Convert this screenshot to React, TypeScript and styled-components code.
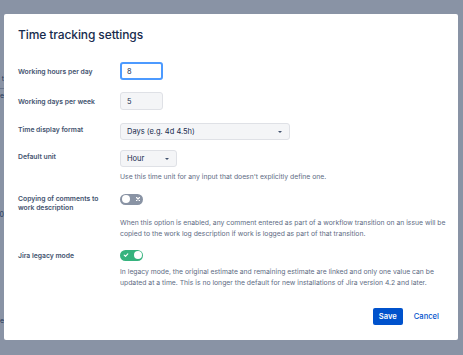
import styled, { createGlobalStyle } from "styled-components";

const GlobalStyle = createGlobalStyle`
  html, body {
    margin: 0;
    padding: 0;
    width: 463px;
    height: 355px;
    overflow: hidden;
    font-family: Inter, "Noto Sans", "Liberation Sans", sans-serif;
    color: #172b4d;
  }
`;

const Page = styled.div`
  position: relative;
  width: 463px;
  height: 355px;
  background: #ffffff;
  overflow: hidden;
`;

const BackStrip = styled.div`
  display: flex;
  flex-direction: column;
  align-items: flex-end;
  width: 4px;
  overflow: hidden;
  font-size: 7px;
  color: #42526e;
`;

const BackGlyph = styled.div<{ $top: number }>`
  margin-top: ${(p) => p.$top}px;
  line-height: 8px;
  white-space: nowrap;
`;

const BackRule = styled.div<{ $top: number }>`
  margin-top: ${(p) => p.$top}px;
  width: 4px;
  height: 1px;
  background: #c1c7d0;
`;

const Overlay = styled.div`
  position: absolute;
  inset: 0;
  background: rgba(9, 30, 66, 0.48);
  padding: 14px 5px 0 4px;
`;

const Dialog = styled.div`
  width: 454px;
  height: 326px;
  box-sizing: border-box;
  background: #ffffff;
  border-radius: 2px;
  padding: 13px 13px 0 14px;
  display: flex;
  flex-direction: column;
`;

const Title = styled.h1`
  margin: 0 0 19px;
  font-size: 12px;
  line-height: 16px;
  font-weight: 500;
  letter-spacing: -0.1px;
  color: #172b4d;
`;

const Row = styled.div<{ $gap: number }>`
  display: grid;
  grid-template-columns: 102px 1fr;
  margin-bottom: ${(p) => p.$gap}px;
`;

const Label = styled.div<{ $pt: number }>`
  padding-top: ${(p) => p.$pt}px;
  font-size: 6.8px;
  line-height: 9px;
  font-weight: 600;
  color: #42526e;
`;

const Field = styled.div`
  display: flex;
  flex-direction: column;
  align-items: flex-start;
`;

const Input = styled.div<{ $focused?: boolean }>`
  box-sizing: border-box;
  width: 43px;
  height: 18px;
  display: flex;
  align-items: center;
  padding-left: ${(p) => (p.$focused ? 5 : 6)}px;
  border-radius: 3px;
  font-size: 7.4px;
  color: #172b4d;
  background: ${(p) => (p.$focused ? "#ffffff" : "#f4f5f7")};
  border: ${(p) => (p.$focused ? "2px solid #4c9aff" : "1px solid #dfe1e6")};
`;

const Select = styled.div<{ $w: number }>`
  box-sizing: border-box;
  width: ${(p) => p.$w}px;
  height: 17px;
  display: flex;
  align-items: center;
  justify-content: space-between;
  padding: 0 7px 0 6px;
  border-radius: 3px;
  font-size: 7.5px;
  color: #172b4d;
  background: #f4f5f7;
  border: 1px solid #dfe1e6;
`;

const Caret = styled.span`
  width: 0;
  height: 0;
  border-left: 2px solid transparent;
  border-right: 2px solid transparent;
  border-top: 2px solid #42526e;
`;

const Help = styled.p<{ $mt: number }>`
  margin: ${(p) => p.$mt}px 0 0;
  font-size: 6.8px;
  line-height: 11.5px;
  color: #5e6c84;
  white-space: nowrap;
`;

const Toggle = styled.div<{ $on?: boolean }>`
  box-sizing: border-box;
  width: 23px;
  height: 11px;
  border-radius: 6px;
  padding: 0 1.5px;
  display: flex;
  align-items: center;
  justify-content: space-between;
  background: ${(p) => (p.$on ? "#36b37e" : "#8993a4")};
`;

const Knob = styled.span`
  width: 8px;
  height: 8px;
  border-radius: 50%;
  background: #ffffff;
`;

const ToggleIcon = styled.svg`
  width: 6px;
  height: 6px;
  margin: 0 1px;
`;

const Footer = styled.div`
  margin-top: auto;
  margin-bottom: 15px;
  display: flex;
  justify-content: flex-end;
  align-items: center;
  gap: 5px;
`;

const Button = styled.button<{ $primary?: boolean }>`
  height: 17px;
  padding: 0 6px;
  border: 0;
  border-radius: 2px;
  font-family: inherit;
  font-size: 7.6px;
  font-weight: ${(p) => (p.$primary ? 600 : 500)};
  color: ${(p) => (p.$primary ? "#ffffff" : "#0052cc")};
  background: ${(p) => (p.$primary ? "#0052cc" : "transparent")};
`;

const Cross = () => (
  <ToggleIcon viewBox="0 0 6 6">
    <path d="M1.5 1.5 L4.5 4.5 M4.5 1.5 L1.5 4.5" stroke="#ffffff" strokeWidth="1.1" strokeLinecap="round" />
  </ToggleIcon>
);

const Check = () => (
  <ToggleIcon viewBox="0 0 6 6">
    <path d="M1.2 3.1 L2.5 4.3 L4.8 1.8" stroke="#ffffff" strokeWidth="1.1" fill="none" strokeLinecap="round" strokeLinejoin="round" />
  </ToggleIcon>
);

const App = () => {
  return (
    <>
      <GlobalStyle />
      <Page>
        <BackStrip>
          <BackGlyph $top={75}>t</BackGlyph>
          <BackRule $top={5} />
          <BackGlyph $top={3}>e</BackGlyph>
          <BackGlyph $top={111}>0</BackGlyph>
          <BackGlyph $top={98}>e</BackGlyph>
        </BackStrip>
        <Overlay>
          <Dialog>
            <Title>Time tracking settings</Title>

            <Row $gap={12}>
              <Label $pt={4.5}>Working hours per day</Label>
              <Field>
                <Input $focused>8</Input>
              </Field>
            </Row>

            <Row $gap={13}>
              <Label $pt={4.5}>Working days per week</Label>
              <Field>
                <Input>5</Input>
              </Field>
            </Row>

            <Row $gap={10}>
              <Label $pt={2}>Time display format</Label>
              <Field>
                <Select $w={170}>
                  <span>Days (e.g. 4d 4.5h)</span>
                  <Caret />
                </Select>
              </Field>
            </Row>

            <Row $gap={11}>
              <Label $pt={1.5}>Default unit</Label>
              <Field>
                <Select $w={57}>
                  <span>Hour</span>
                  <Caret />
                </Select>
                <Help $mt={4}>Use this time unit for any input that doesn't explicitly define one.</Help>
              </Field>
            </Row>

            <Row $gap={10}>
              <Label $pt={0}>
                Copying of comments to
                <br />
                work description
              </Label>
              <Field>
                <Toggle>
                  <Knob />
                  <Cross />
                </Toggle>
                <Help $mt={12}>
                  When this option is enabled, any comment entered as part of a workflow transition on an issue will be
                  <br />
                  copied to the work log description if work is logged as part of that transition.
                </Help>
              </Field>
            </Row>

            <Row $gap={0}>
              <Label $pt={1}>Jira legacy mode</Label>
              <Field>
                <Toggle $on>
                  <Check />
                  <Knob />
                </Toggle>
                <Help $mt={5}>
                  In legacy mode, the original estimate and remaining estimate are linked and only one value can be
                  <br />
                  updated at a time. This is no longer the default for new installations of Jira version 4.2 and later.
                </Help>
              </Field>
            </Row>

            <Footer>
              <Button $primary>Save</Button>
              <Button>Cancel</Button>
            </Footer>
          </Dialog>
        </Overlay>
      </Page>
    </>
  );
};

export default App;
